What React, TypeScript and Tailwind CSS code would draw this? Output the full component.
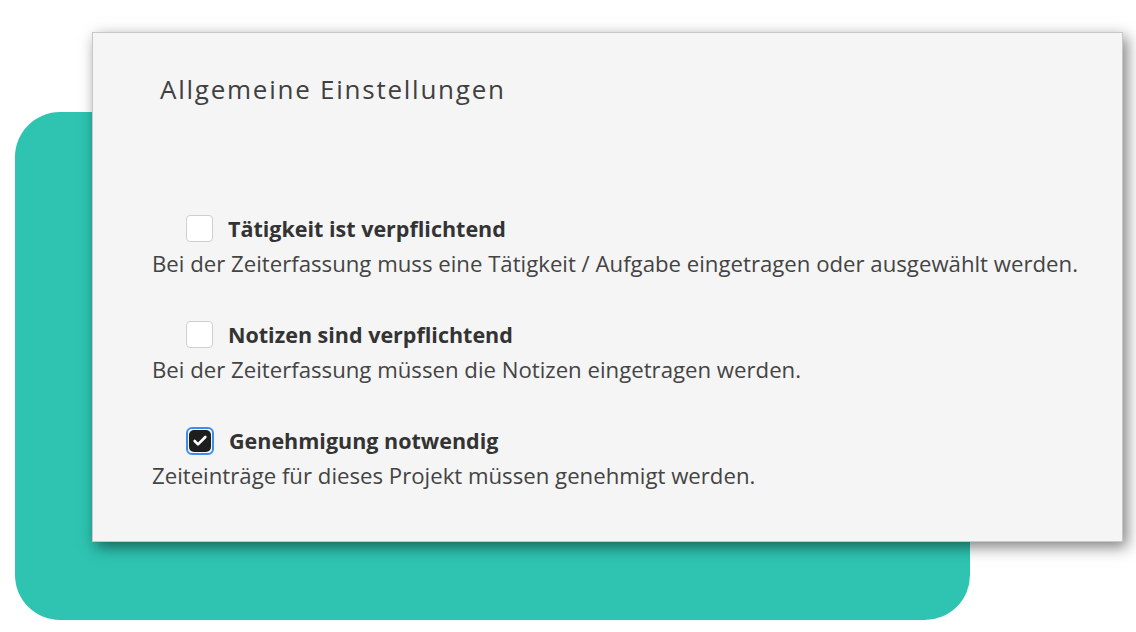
import { Check } from "lucide-react";

interface Setting {
  label: string;
  description: string;
  checked: boolean;
}

const settings: Setting[] = [
  {
    label: "Tätigkeit ist verpflichtend",
    description:
      "Bei der Zeiterfassung muss eine Tätigkeit / Aufgabe eingetragen oder ausgewählt werden.",
    checked: false,
  },
  {
    label: "Notizen sind verpflichtend",
    description: "Bei der Zeiterfassung müssen die Notizen eingetragen werden.",
    checked: false,
  },
  {
    label: "Genehmigung notwendig",
    description: "Zeiteinträge für dieses Projekt müssen genehmigt werden.",
    checked: true,
  },
];

function Checkbox({ checked }: { checked: boolean }) {
  if (checked) {
    return (
      <div className="w-[28px] h-[28px] rounded-[6px] border-2 border-[#3b8ef0] flex items-center justify-center">
        <div className="w-[22px] h-[22px] rounded-[5px] bg-[#1e1e1e] flex items-center justify-center">
          <Check className="w-[16px] h-[16px] text-white" strokeWidth={4} />
        </div>
      </div>
    );
  }
  return (
    <div className="w-[27px] h-[27px] rounded-[4px] border border-[#cfcfcf] bg-white" />
  );
}

export default function App() {
  return (
    <div
      className="relative w-[1136px] h-[632px] bg-white overflow-hidden"
      style={{ fontFamily: '"Open Sans", "Noto Sans", sans-serif' }}
    >
      <div className="ml-[15px] mt-[112px] w-[955px] h-[508px] rounded-[45px] bg-[#2ec4b1]" />

      <div className="absolute left-[92px] top-[32px] w-[1031px] h-[510px] bg-[#f5f5f5] border border-[#c8c8c8] shadow-[4px_5px_14px_rgba(0,0,0,0.5)]">
        <h2 className="pl-[67px] pt-[39px] text-[26px] leading-[34px] tracking-[1.75px] text-[#404040]">
          Allgemeine Einstellungen
        </h2>

        <div className="mt-[109px] flex flex-col gap-[44px]">
          {settings.map((s) => (
            <div key={s.label} className="flex flex-col">
              <div className="flex items-center h-[27px] pl-[93px] gap-[15px]">
                <Checkbox checked={s.checked} />
                <span className="text-[21.5px] font-bold text-[#333] leading-[27px]">
                  {s.label}
                </span>
              </div>
              <p className="pl-[59px] mt-[9px] text-[22.2px] leading-[26px] text-[#444]">
                {s.description}
              </p>
            </div>
          ))}
        </div>
      </div>
    </div>
  );
}
